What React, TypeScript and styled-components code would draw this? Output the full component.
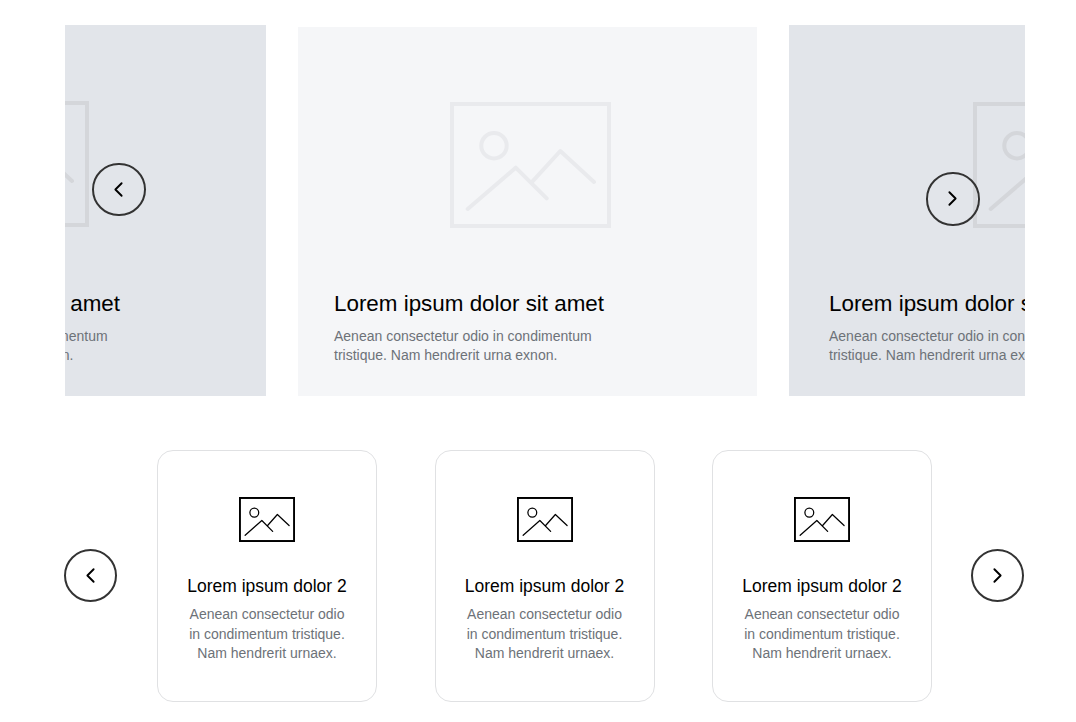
import React from 'react';
import styled, { createGlobalStyle } from 'styled-components';
import { ChevronLeft, ChevronRight } from 'lucide-react';

const GlobalStyle = createGlobalStyle`
  html, body {
    margin: 0;
    padding: 0;
    background: #fff;
    font-family: "Liberation Sans", Arial, sans-serif;
  }
`

const Page = styled.div`
  width: 1076px;
  height: 722px;
  overflow: hidden;
  box-sizing: border-box;
  padding: 25px 51px 0 64px;
`

const HeroSlider = styled.div`
  position: relative;
  width: 960px;
  margin-left: 1px;
  height: 371px;
  overflow: hidden;
`

const HeroTrack = styled.div`
  display: flex;
  align-items: flex-end;
  gap: 32px;
  height: 100%;
  margin-left: -320px;
`

const Slide = styled.div<{ $active?: boolean; $width: number; $iconTop: number; $iconInset: number; $textInset: number }>`
  flex: 0 0 ${p => p.$width}px;
  box-sizing: border-box;
  height: ${p => (p.$active ? 369 : 371)}px;
  padding-top: ${p => p.$iconTop}px;
  background: ${p => (p.$active ? '#f5f6f8' : '#e2e5ea')};
  color: ${p => (p.$active ? '#e9eaed' : '#d4d6da')};

  > svg {
    display: block;
    margin-left: ${p => p.$iconInset}px;
  }

  > div {
    margin-left: ${p => p.$textInset}px;
  }
`

const SlideText = styled.div<{ $gap: number }>`
  margin-top: ${p => p.$gap}px;
  width: 300px;
`

const SlideTitle = styled.div`
  font-size: 22.4px;
  line-height: 28px;
  color: #000;
  white-space: nowrap;
`

const SlideBody = styled.div`
  margin-top: 9px;
  font-size: 14px;
  line-height: 19px;
  color: #6d7278;
  white-space: nowrap;
`

const Arrow = styled.button<{ $top?: number; $left?: number }>`
  ${p => (p.$top !== undefined ? `position: absolute; top: ${p.$top}px; left: ${p.$left}px;` : '')}
  flex: 0 0 53.5px;
  width: 53.5px;
  height: 53.5px;
  padding: 0;
  display: flex;
  align-items: center;
  justify-content: center;
  border: 2px solid #333;
  border-radius: 50%;
  background: transparent;
  color: #000;
  box-sizing: border-box;
`

const CardRow = styled.div`
  display: flex;
  align-items: center;
  justify-content: space-between;
  width: 960.5px;
  margin: 54px 0 0 -0.5px;

  > button {
    margin-top: -1px;
  }
`

const Cards = styled.div`
  display: flex;
  gap: 57.5px;
  margin-left: 1.5px;
`

const Card = styled.div`
  width: 220px;
  height: 252px;
  box-sizing: border-box;
  padding-top: 46px;
  border: 1px solid #e0e1e3;
  border-radius: 16px;
  background: #fff;
  text-align: center;
  color: #000;

  > svg {
    display: block;
    margin: 0 auto;
  }
`

const CardTitle = styled.div`
  margin-top: 33px;
  font-size: 17.5px;
  line-height: 22px;
  color: #000;
`

const CardBody = styled.div`
  margin-top: 8px;
  font-size: 14px;
  line-height: 19.5px;
  color: #6d7278;
`

const PlaceholderIcon = ({ width, height, frame, line }: { width: number; height: number; frame: number; line: number }) => (
  <svg width={width} height={height} viewBox="0 0 161 126" fill="none" stroke="currentColor" strokeLinecap="round" strokeLinejoin="round" preserveAspectRatio="none">
    <rect x={frame / 2} y={frame / 2} width={161 - frame} height={126 - frame} strokeWidth={frame} strokeLinejoin="miter" />
    <circle cx="44" cy="43.7" r="12.7" strokeWidth={line} />
    <path d="M17.7 107 65.7 65.7 96.7 96.3M82.3 79.7 110.3 49 144 80" strokeWidth={line} />
  </svg>
)

const heroIcon = { width: 161, height: 126, frame: 4, line: 4 }
const cardIcon = { width: 56, height: 45, frame: 5.5, line: 3.6 }

const slides = [
  { key: 'prev', width: 521, iconTop: 76, textGap: 63, iconInset: 183, textInset: 105 },
  { key: 'current', width: 459, iconTop: 75, textGap: 62, iconInset: 152, textInset: 36, active: true },
  { key: 'next', width: 520, iconTop: 77, textGap: 62, iconInset: 184, textInset: 40 },
]

export default function App() {
  return (
    <>
      <GlobalStyle />
      <Page>
        <HeroSlider>
          <HeroTrack>
            {slides.map(s => (
              <Slide
                key={s.key}
                $active={s.active}
                $width={s.width}
                $iconTop={s.iconTop}
                $iconInset={s.iconInset}
                $textInset={s.textInset}
              >
                <PlaceholderIcon {...heroIcon} />
                <SlideText $gap={s.textGap}>
                  <SlideTitle>Lorem ipsum dolor sit amet</SlideTitle>
                  <SlideBody>
                    Aenean consectetur odio in condimentum
                    <br />
                    tristique. Nam hendrerit urna exnon.
                  </SlideBody>
                </SlideText>
              </Slide>
            ))}
          </HeroTrack>
          <Arrow $top={137.5} $left={27}><ChevronLeft size={25} strokeWidth={1.8} /></Arrow>
          <Arrow $top={147} $left={861}><ChevronRight size={25} strokeWidth={1.8} /></Arrow>
        </HeroSlider>
        <CardRow>
          <Arrow><ChevronLeft size={25} strokeWidth={1.8} /></Arrow>
          <Cards>
            {[1, 2, 3].map(n => (
              <Card key={n}>
                <PlaceholderIcon {...cardIcon} />
                <CardTitle>Lorem ipsum dolor 2</CardTitle>
                <CardBody>
                  Aenean consectetur odio
                  <br />
                  in condimentum tristique.
                  <br />
                  Nam hendrerit urnaex.
                </CardBody>
              </Card>
            ))}
          </Cards>
          <Arrow><ChevronRight size={25} strokeWidth={1.8} /></Arrow>
        </CardRow>
      </Page>
    </>
  )
}
